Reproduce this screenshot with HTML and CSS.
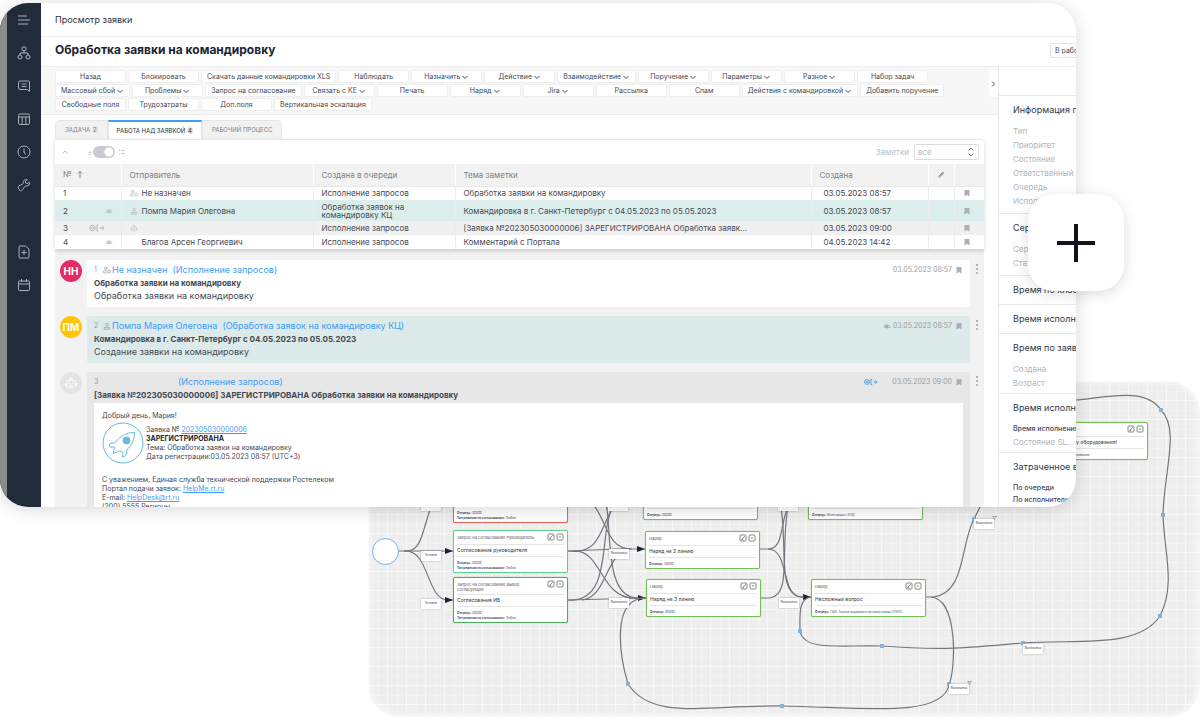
FILE: index.html
```html
<!DOCTYPE html>
<html lang="ru">
<head>
  <meta charset="UTF-8">
  <meta name="viewport" content="width=device-width, initial-scale=1.0">
  <title>Просмотр заявки</title>
  <link rel="stylesheet" href="styles.css">
</head>
<body>
  <!-- shared icons -->
  <svg class="sprite" aria-hidden="true">
    <symbol id="chev" viewBox="0 0 8 8"><path d="M1.5 3 4 5.5 6.5 3"/></symbol>
    <symbol id="mark" viewBox="0 0 8 8"><path d="M1.5 1h5v6.5L4 6 1.5 7.5z" fill="currentColor" stroke="none"/></symbol>
    <symbol id="user" viewBox="0 0 10 10"><circle cx="5" cy="3.2" r="1.7"/><path d="M1.5 9V7.600q0-1 1-1h5q1 0 1 1V9z"/></symbol>
    <symbol id="user-off" viewBox="0 0 10 10"><circle cx="3.500" cy="2.800" r="1.500"/><path d="M.6 8.500V7q0-1 1-1h3M1 8.500h3.500"/><circle cx="7.500" cy="7" r="1.800"/></symbol>
    <symbol id="eye" viewBox="0 0 10 10"><path d="M1 6q4-4 8 0-4 3-8 0zM2 3.500l1 .8M5 2.600v1M8 3.500l-1 .8"/><circle cx="5" cy="6" r="1" fill="currentColor"/></symbol>
    <symbol id="robot" viewBox="0 0 16 16"><rect x="3" y="5" width="10" height="8" rx="2"/><path d="M8 5V2.500M6 2.500h4M1.500 8v3M14.500 8v3M6 10.800h4"/><circle cx="6" cy="8.200" r=".7"/><circle cx="10" cy="8.200" r=".7"/></symbol>
    <symbol id="mail-out" viewBox="0 0 16 8"><circle cx="3.500" cy="4" r="2.800"/><circle cx="3.500" cy="4" r="1"/><path d="M9.500 1H8v6h1.500M10.500 4h4.500M13 2.200 15 4l-2 1.800"/></symbol>
    <symbol id="edit" viewBox="0 0 8 8"><rect x="1" y="1" width="6" height="6" rx="1"/><path d="M2.600 5.600 5.800 2.200M2.500 5.600h1.600"/></symbol>
    <symbol id="fold" viewBox="0 0 8 8"><rect x="1" y="1" width="6" height="6" rx="1"/><path d="M2.800 4h2.400"/></symbol>
    <symbol id="dots" viewBox="0 0 4 12"><g fill="currentColor" stroke="none"><circle cx="2" cy="2" r="1"/><circle cx="2" cy="6" r="1"/><circle cx="2" cy="10" r="1"/></g></symbol>
  </svg>

  <div class="stage">

    <section class="diagram" aria-label="Рабочий процесс">
      <svg class="edges" viewBox="0 0 832 336">
        <defs>
          <marker id="arrow" viewBox="0 0 8 6" refX="8" refY="3" markerWidth="8" markerHeight="6" markerUnits="userSpaceOnUse" orient="auto"><path d="M0 0 8 3 0 6z" fill="#1c2233" stroke="none"/></marker>
        </defs>
        <g class="lines">
          <path d="M31 170H85" marker-end="url(#arrow)"/>
          <path d="M36 170C54 172 54 150 63 126"/>
          <path d="M36 170C62 168 58 219 80 219H85" marker-end="url(#arrow)"/>
          <path d="M200 170 250 168H277" marker-end="url(#arrow)"/>
          <path d="M200 170C232 174 232 148 245 126"/>
          <path d="M205 170C234 168 232 217 266 217H278" marker-end="url(#arrow)"/>
          <path d="M200 219 278 217"/>
          <path d="M200 219C246 222 230 150 245 126"/>
          <path d="M214 219C234 217 236 190 250 174"/>
          <path d="M224 122C240 140 238 168 264 168"/>
          <path d="M238 122C244 150 236 217 270 217"/>
          <path d="M391 168H400C416 168 412 142 420 126"/>
          <path d="M400 168C422 168 412 216 434 216H443" marker-end="url(#arrow)"/>
          <path d="M392 217H402C424 214 412 170 420 126"/>
          <path d="M413 126C420 170 408 216 436 216"/>
          <path d="M557 216H565C598 212 592 164 606 138L614 122"/>
          <path d="M563 216C590 218 588 286 581 304 574 338 490 326 414 325S284 340 260 303C252 276 242 217 278 217"/>
          <path d="M443 216C430 218 432 234 432 250C436 270 468 264 514 265 580 270 610 266 655 262C710 258 770 268 792 235C808 204 796 170 795 134C796 90 812 48 793 29C778 6 740 16 708 19"/>
        </g>
        <g class="joints">
          <path d="M258 301h4v4h-4zM412 323h4v4h-4zM430 248h4v4h-4zM512 263h4v4h-4zM653 260h4v4h-4zM790 233h4v4h-4zM793 132h4v4h-4zM791 27h4v4h-4zM604 136h4v4h-4zM579 301h4v4h-4z"/>
        </g>
      </svg>

      <span class="start"></span>

      <article class="node red n-a">
        <header>Запрос на согласование</header><h4>Согласование</h4>
        <p><b>Очередь:</b> #####<br><b>Тип решения по согласованию:</b> Любой</p>
      </article>
      <article class="node mint n-b">
        <header>Запрос на согласование Руководитель<span><svg><use href="#edit"/></svg><svg><use href="#fold"/></svg></span></header>
        <h4>Согласование руководителя</h4>
        <p><b>Очередь:</b> #####<br><b>Тип решения по согласованию:</b> Любой</p>
      </article>
      <article class="node green n-c">
        <header>Запрос на согласование Выбор<br>согласующих<span><svg><use href="#edit"/></svg><svg><use href="#fold"/></svg></span></header>
        <h4>Согласование ИБ</h4>
        <p><b>Очередь:</b> #####<br><b>Тип решения по согласованию:</b> Любой</p>
      </article>
      <article class="node n-d">
        <header>Наряд</header><h4>Наряд на 1 линию</h4>
        <p><b>Очередь:</b> #####</p>
      </article>
      <article class="node n-e">
        <header>Наряд<span><svg><use href="#edit"/></svg><svg><use href="#fold"/></svg></span></header>
        <h4>Наряд на 2 линию</h4>
        <p><b>Очередь:</b> #####</p>
      </article>
      <article class="node n-f">
        <header>Наряд<span><svg><use href="#edit"/></svg><svg><use href="#fold"/></svg></span></header>
        <h4>Наряд на 3 линию</h4>
        <p><b>Очередь:</b> #####</p>
      </article>
      <article class="node n-g">
        <header>Наряд</header><h4>Интеграция</h4>
        <p><b>Очередь:</b> Интеграция с КПД</p>
      </article>
      <article class="node n-h">
        <header>Наряд<span><svg><use href="#edit"/></svg><svg><use href="#fold"/></svg></span></header>
        <h4>Несложный вопрос</h4>
        <p><b>Очередь:</b> ГШО. Группа поддержки тестовой среды СУФПС</p>
      </article>
      <article class="node n-i">
        <header>Наряд<span><svg><use href="#edit"/></svg><svg><use href="#fold"/></svg></span></header>
        <h4>Доступ к новому оборудования!</h4>
        <p><b>Очередь:</b> Группа по оборудованию</p>
      </article>

      <span class="tag t-1">Успешно</span>
      <span class="tag t-2">Условие</span>
      <span class="tag t-3">Условие</span>
      <span class="tag t-4">Выполнено</span>
      <span class="tag t-5">Выполнено</span>
      <span class="tag t-6">Выполнено</span>
      <span class="tag t-7">Выполнено</span>
      <span class="tag t-8">Выполнено</span>
      <span class="tag funnel t-9">Выполнено</span>
      <span class="tag t-10">Выполнено</span>
      <span class="tag funnel t-11">Выполнено</span>
    </section>

    <main class="window">
      <nav class="sidebar">
        <a href="#" aria-label="Меню"><svg viewBox="0 0 14 14"><path d="M1 3h9M1 7h12M1 11h10"/></svg></a>
        <a href="#" aria-label="Структура"><svg viewBox="0 0 14 14"><rect x="5" y="1" width="4" height="3.500" rx="1"/><circle cx="3" cy="11" r="2"/><circle cx="11" cy="11" r="2"/><path d="M7 4.500v2.500M3 9V7h8v2"/></svg></a>
        <a href="#" aria-label="Сообщения"><svg viewBox="0 0 14 14"><path d="M3 2h8.500q1 0 1 1v9.500L10.500 10.500H3Q1.500 10.500 1.500 9V3.500Q1.500 2 3 2zM4.500 5h5M4.500 7.500h5"/></svg></a>
        <a href="#" aria-label="Таблица"><svg viewBox="0 0 14 14"><rect x="1.500" y="2" width="11" height="10.500" rx="1.500"/><path d="M1.500 5h11M5.200 5v7.500M8.800 5v7.500"/></svg></a>
        <a href="#" aria-label="Время"><svg viewBox="0 0 14 14"><circle cx="7" cy="7" r="6"/><path d="M7 3.500V7l1.500 2.500"/></svg></a>
        <a href="#" aria-label="Настройки"><svg viewBox="0 0 14 14"><path d="M12.500 4.200 10.400 5.600 8.600 5 8.400 3.200 10.300 1.600C8 .8 5.800 2.700 6.400 5.300L5 6.400 2 7.800C.5 9 1.300 10.500 2 11l.8 1.500c1 .8 2.400.3 3-1L6.800 9.500 8.800 8C11.500 8.300 13.200 6.400 12.500 4.200z"/></svg></a>
        <a href="#" class="split" aria-label="Новый документ"><svg viewBox="0 0 14 14"><path d="M3 1h5.500L12 4v8q0 1-1 1H3q-1 0-1-1V2q0-1 1-1zM7 5v5M4.500 7.500h5"/></svg></a>
        <a href="#" aria-label="Календарь"><svg viewBox="0 0 14 14"><rect x="1.500" y="3" width="11" height="9.500" rx="1"/><path d="M1.500 6h11M4.500 1v3M9.500 1v3"/></svg></a>
      </nav>

      <div class="main">
        <div class="crumbs">Просмотр заявки</div>
        <div class="heading">
          <h1>Обработка заявки на командировку</h1>
          <button class="status">В работе</button>
        </div>

        <div class="columns">
          <div class="content">
            <div class="toolbar">
              <div class="actions">
                <button>Назад</button>
                <button>Блокировать</button>
                <button>Скачать данные командировки XLS</button>
                <button>Наблюдать</button>
                <button>Назначить<svg><use href="#chev"/></svg></button>
                <button>Действие<svg><use href="#chev"/></svg></button>
                <button>Взаимодействие<svg><use href="#chev"/></svg></button>
                <button>Поручение<svg><use href="#chev"/></svg></button>
                <button>Параметры<svg><use href="#chev"/></svg></button>
                <button>Разное<svg><use href="#chev"/></svg></button>
                <button>Набор задач</button>
                <button>Массовый сбой<svg><use href="#chev"/></svg></button>
                <button>Проблемы<svg><use href="#chev"/></svg></button>
                <button>Запрос на согласование</button>
                <button>Связать с КЕ<svg><use href="#chev"/></svg></button>
                <button>Печать</button>
                <button>Наряд<svg><use href="#chev"/></svg></button>
                <button>Jira<svg><use href="#chev"/></svg></button>
                <button>Рассылка</button>
                <button>Спам</button>
                <button>Действия с командировкой<svg><use href="#chev"/></svg></button>
                <button>Добавить поручение</button>
                <button>Свободные поля</button>
                <button>Трудозатраты</button>
                <button>Доп.поля</button>
                <button>Вертикальная эскалация</button>
              </div>
              <button class="collapse" aria-label="Свернуть"><svg viewBox="0 0 8 8"><path d="M3 1.500 5.500 4 3 6.500"/></svg></button>
            </div>

            <div class="tabs">
              <a href="#">ЗАДАЧА <i>2</i></a>
              <a href="#" class="active">РАБОТА НАД ЗАЯВКОЙ <i>4</i></a>
              <a href="#">РАБОЧИЙ ПРОЦЕСС</a>
            </div>

            <div class="card">
              <div class="filter">
                <svg class="up" viewBox="0 0 8 8"><path d="M1.500 5.500 4 3l2.500 2.500"/></svg>
                <label class="switch"><span>±</span><input type="checkbox" checked aria-label="Вид списка"></label>
                <svg class="list" viewBox="0 0 10 10"><path d="M1 2h1v2M1 7.500h1.500M4 3h5M4 7h5"/></svg>
                <label class="pick">Заметки <select><option>все</option></select><svg viewBox="0 0 8 10"><path d="M1.500 3.500 4 1l2.500 2.500M1.500 6.500 4 9l2.500-2.500"/></svg></label>
              </div>
              <table>
                <colgroup><col class="c-num"><col class="c-from"><col class="c-queue"><col><col class="c-date"><col class="c-clip"><col class="c-mark"></colgroup>
                <thead>
                  <tr><th>№ <svg class="sort" viewBox="0 0 8 10"><path d="M4 9V1.500M1.500 4 4 1.500 6.500 4"/></svg></th><th>Отправитель</th><th>Создана в очереди</th><th>Тема заметки</th><th>Создана</th><th><svg class="clip" viewBox="0 0 10 10"><path d="M2 7.500 6.500 2.500q1.500-1 2 .5L4.500 7.800q-1.500 1.200-2.500 0M3.500 6.500 7 3.500"/></svg></th><th></th></tr>
                </thead>
                <tbody>
                  <tr><td>1</td><td><span class="who"><svg><use href="#user-off"/></svg>Не назначен</span></td><td>Исполнение запросов</td><td>Обработка заявки на командировку</td><td>03.05.2023 08:57</td><td></td><td><svg class="mark"><use href="#mark"/></svg></td></tr>
                  <tr class="sel"><td>2<svg class="flag"><use href="#eye"/></svg></td><td><span class="who"><svg><use href="#user"/></svg>Помпа Мария Олеговна</span></td><td>Обработка заявок на командировку КЦ</td><td>Командировка в г. Санкт-Петербург с 04.05.2023 по 05.05.2023</td><td>03.05.2023 08:57</td><td></td><td><svg class="mark"><use href="#mark"/></svg></td></tr>
                  <tr class="alt"><td>3<svg class="flag wide"><use href="#mail-out"/></svg></td><td><span class="who"><svg><use href="#robot"/></svg></span></td><td>Исполнение запросов</td><td>[Заявка №202305030000006] ЗАРЕГИСТРИРОВАНА Обработка заявк...</td><td>03.05.2023 09:00</td><td></td><td><svg class="mark"><use href="#mark"/></svg></td></tr>
                  <tr><td>4<svg class="flag"><use href="#eye"/></svg></td><td><span class="who"><svg></svg>Благов Арсен Георгиевич</span></td><td>Исполнение запросов</td><td>Комментарий с Портала</td><td>04.05.2023 14:42</td><td></td><td><svg class="mark"><use href="#mark"/></svg></td></tr>
                </tbody>
              </table>
            </div>

            <div class="notes">
              <div class="note">
                <span class="avatar pink">НН</span>
                <div class="bubble">
                  <div class="meta"><small>1</small><svg><use href="#user-off"/></svg><a href="#">Не назначен&nbsp; (Исполнение запросов)</a><time>03.05.2023 08:57</time><svg class="mark"><use href="#mark"/></svg></div>
                  <h3>Обработка заявки на командировку</h3>
                  <p>Обработка заявки на командировку</p>
                </div>
                <svg class="dots"><use href="#dots"/></svg>
              </div>
              <div class="note">
                <span class="avatar yellow">ПМ</span>
                <div class="bubble teal">
                  <div class="meta"><small>2</small><svg><use href="#user"/></svg><a href="#">Помпа Мария Олеговна&nbsp; (Обработка заявок на командировку КЦ)</a><svg class="pre"><use href="#eye"/></svg><time>03.05.2023 08:57</time><svg class="mark"><use href="#mark"/></svg></div>
                  <h3>Командировка в г. Санкт-Петербург с 04.05.2023 по 05.05.2023</h3>
                  <p>Создание заявки на командировку</p>
                </div>
                <svg class="dots"><use href="#dots"/></svg>
              </div>
              <div class="note">
                <span class="avatar bot"><svg><use href="#robot"/></svg></span>
                <div class="bubble gray">
                  <div class="meta"><small>3</small><a href="#" class="far">(Исполнение запросов)</a><svg class="pre out"><use href="#mail-out"/></svg><time>03.05.2023 09:00</time><svg class="mark"><use href="#mark"/></svg></div>
                  <h3>[Заявка №202305030000006] ЗАРЕГИСТРИРОВАНА Обработка заявки на командировку</h3>
                  <div class="letter">
                    <p>Добрый день, Мария!</p>
                    <div class="ticket">
                      <svg viewBox="0 0 42 42"><circle cx="21" cy="21" r="20"/><path d="M32.500 10.500C24 10.500 18 14.500 13.500 20.500L8 21.500Q6.500 22.500 8 25L12.500 25Q12 29 11 31.500 14 30.500 17.500 29L21 30.500Q21.500 32 20 35 23 35.500 24.500 32L25 27.500C30 23.500 32.500 18 32.500 10.500z"/><circle class="fill" cx="24.500" cy="18.500" r="3.500"/></svg>
                      <p>Заявка № <a href="#">202305030000006</a><br><b>ЗАРЕГИСТРИРОВАНА</b><br>Тема: Обработка заявки на командировку<br>Дата регистрации:03.05.2023 08:57 (UTC+3)</p>
                    </div>
                    <p>С уважением, Единая служба технической поддержки Ростелеком<br>Портал подачи заявок: <a href="#">HelpMe.rt.ru</a><br>E-mail: <a href="#">HelpDesk@rt.ru</a><br>(200) 5555 Регионы</p>
                  </div>
                </div>
                <svg class="dots"><use href="#dots"/></svg>
              </div>
            </div>
          </div>

          <aside class="details">
            <div class="blank"></div>
            <section>
              <h2>Информация по заявке</h2>
              <p>Тип</p><p>Приоритет</p><p>Состояние</p><p>Ответственный</p><p>Очередь</p><p>Исполнитель</p>
            </section>
            <section>
              <h2>Сервис</h2>
              <p>Сервис</p><p>Статус</p>
            </section>
            <section><h2>Время по классу</h2></section>
            <section><h2>Время исполнения</h2></section>
            <section class="tight">
              <h2>Время по заявке</h2>
              <p>Создана</p><p>Возраст</p>
            </section>
            <section class="tight">
              <h2>Время исполнения</h2>
              <h5>Время исполнения</h5><p>Состояние SL...</p>
            </section>
            <section>
              <h2>Затраченное время</h2>
              <h5>По очереди</h5><h5>По исполнителю</h5>
            </section>
          </aside>
        </div>
      </div>
    </main>

    <button class="plus" aria-label="Добавить"><svg viewBox="0 0 40 40"><path d="M20 1v38M1 20h38"/></svg></button>
  </div>
</body>
</html>
```
FILE: styles.css
```css
* {
  box-sizing: border-box;
}
body, h1, h2, h3, h4, h5, p {
  margin: 0;
}
body {
  font-family: Inter, "Noto Sans", sans-serif;
  font-size: 8px;
  color: #444955;
  background: #fff;
}
a {
  color: #3f9df5;
  text-decoration: none;
}
button, select {
  font: inherit;
  color: inherit;
}
svg {
  display: block;
  flex: none;
  width: 8px;
  height: 8px;
  fill: none;
  stroke: currentColor;
}
.sprite {
  position: absolute;
  width: 0;
  height: 0;
}
.stage {
  position: relative;
  height: 100vh;
  padding: 3px 124px 210px 0;
  overflow: hidden;
}

/* window */
.window {
  position: relative;
  display: flex;
  height: 100%;
  border-radius: 28px;
  overflow: hidden;
  background: #fff;
  box-shadow: 0 2px 18px rgba(0, 0, 0, 0.16);
}
.sidebar {
  flex: none;
  width: 41px;
  border-left: 7px solid #8c8c8c;
  background: #222b3a;
}
.sidebar a {
  display: flex;
  align-items: center;
  justify-content: center;
  height: 33px;
  color: #aab0b9;
}
.sidebar .split {
  margin-top: 34px;
}
.sidebar svg {
  width: 14px;
  height: 14px;
}
.main {
  display: flex;
  flex-direction: column;
  flex: 1;
  min-width: 0;
}
.crumbs {
  flex: none;
  padding-left: 14px;
  font-size: 9px;
  line-height: 33px;
  color: #2b303a;
  border-bottom: 1px solid #ececec;
}
.heading {
  display: flex;
  flex: none;
  align-items: center;
  justify-content: space-between;
  height: 29px;
  padding: 0 0 3px 14px;
}
h1 {
  font-size: 12px;
  font-weight: 700;
  line-height: 16px;
  color: #1c2430;
}
.status {
  flex: none;
  width: 26px;
  height: 15px;
  padding: 0 0 0 4px;
  overflow: hidden;
  white-space: nowrap;
  text-align: left;
  font-size: 7px;
  background: #fff;
  border: 1px solid #e4e4e4;
  border-right: 0;
  border-radius: 2px 0 0 2px;
}
.columns {
  display: flex;
  flex: 1;
  min-height: 0;
}
.content {
  display: flex;
  flex-direction: column;
  flex: 1;
  min-width: 0;
}

/* toolbar */
.toolbar {
  display: flex;
  justify-content: space-between;
  flex: none;
  height: 49px;
  padding: 3px 0 0 14px;
  background: #f7f7f7;
  border-top: 1px solid #eee;
  border-bottom: 1px solid #eaeaea;
}
.actions {
  display: flex;
  flex-wrap: wrap;
  align-content: flex-start;
  gap: 1px 2px;
}
.actions button {
  display: flex;
  align-items: center;
  justify-content: center;
  gap: 1px;
  min-width: 71px;
  height: 13px;
  padding: 0 5px;
  font-size: 7px;
  line-height: 11px;
  background: #fff;
  border: 1px solid #eee;
  border-radius: 2px;
}
.collapse {
  flex: none;
  width: 9px;
  height: 27px;
  padding: 0;
  background: #fff;
  border: 0;
  border-radius: 4px 0 0 4px;
}

/* tabs */
.tabs {
  display: flex;
  flex: none;
  padding: 5px 0 0 14px;
}
.tabs a {
  padding: 0 9px;
  font-size: 6px;
  line-height: 18px;
  color: #7d828a;
  background: #f2f2f2;
  border: 1px solid #e6e6e6;
  border-bottom: 0;
}
.tabs a:first-child {
  border-radius: 5px 0 0 0;
}
.tabs a:last-child {
  border-radius: 0 5px 0 0;
}
.tabs .active {
  padding: 0 8px;
  line-height: 17px;
  color: #2b303a;
  background: #fff;
  border-top: 2px solid #3f9df5;
}
.tabs i {
  padding: 0 1px;
  font-style: normal;
  background: #e4e4e4;
  border-radius: 4px;
}

/* notes table */
.card {
  position: relative;
  flex: none;
  margin: 0 14px;
  background: #fff;
  border-top: 1px solid #e8e8e8;
  border-radius: 0 4px 0 0;
  box-shadow: 0 2px 4px rgba(0, 0, 0, 0.16);
}
.filter {
  display: flex;
  align-items: center;
  gap: 3px;
  height: 24px;
  padding: 0 5px 0 6px;
  color: #b9bcc6;
}
.switch {
  display: flex;
  align-items: center;
  gap: 1px;
  margin-left: 16px;
  font-size: 6px;
}
.switch input {
  appearance: none;
  width: 22px;
  height: 12px;
  margin: 0;
  border-radius: 6px;
  background: radial-gradient(circle at 16px 6px, #fff 4px, #c9cad4 5px);
}
.pick {
  display: flex;
  align-items: center;
  gap: 5px;
  margin-left: auto;
  font-size: 8px;
}
.pick select {
  appearance: none;
  width: 65px;
  height: 16px;
  margin-right: -17px;
  padding: 0 3px;
  background: #fff;
  border: 1px solid #ddd;
  border-radius: 2px;
}
.pick svg {
  height: 10px;
  margin-right: 4px;
  color: #777;
}
table {
  width: 100%;
  table-layout: fixed;
  border-collapse: collapse;
  font-size: 8px;
  line-height: 8px;
}
.c-num { width: 66px; }
.c-from { width: 192px; }
.c-queue { width: 142px; }
.c-date { width: 117px; }
.c-clip { width: 26px; }
.c-mark { width: 30px; }
th, td {
  padding: 0 8px;
  text-align: left;
  font-weight: 400;
  border-right: 1px solid #ececec;
}
th:last-child, td:last-child {
  border-right: 0;
}
th {
  height: 22px;
  color: #7b7f88;
  background: #f2f2f2;
  border-bottom: 1px solid #e8e8e8;
  border-right-color: #fff;
}
td {
  height: 14px;
}
td:nth-child(5) {
  padding-left: 12px;
}
.sel td {
  height: 21px;
  padding-right: 24px;
  background: #dbeeeb;
}
.sel td:first-child {
  padding-right: 8px;
}
.alt td {
  background: #f0f0f0;
}
.sort, .clip {
  display: inline-block;
  height: 9px;
  vertical-align: middle;
}
.sort {
  margin-left: 2px;
}
.flag {
  float: right;
  color: #b4b8bc;
}
.flag.wide {
  width: 16px;
  margin-right: 8px;
}
.who {
  display: flex;
  align-items: center;
  gap: 4px;
}
.who svg {
  color: #b4b8bc;
}
.mark {
  color: #adb1b5;
}

/* notes feed */
.notes {
  display: flex;
  flex-direction: column;
  flex: 1;
  gap: 9px;
  min-height: 0;
  margin: 0 14px;
  padding: 11px 5px 0;
  overflow: hidden;
  background: #f2f2f3;
}
.note {
  display: flex;
  flex: none;
}
.avatar {
  display: flex;
  align-items: center;
  justify-content: center;
  flex: none;
  width: 22px;
  height: 22px;
  margin-right: 5px;
  border-radius: 50%;
  font-size: 10px;
  font-weight: 700;
  color: #fff;
}
.avatar.pink { background: #e62a66; }
.avatar.yellow { background: #fdc506; }
.avatar.bot { background: #e4e4e4; }
.avatar.bot svg {
  width: 14px;
  height: 14px;
}
.bubble {
  flex: 1;
  min-width: 0;
  height: 47px;
  padding: 3px 7px 0;
  background: #fff;
  border-radius: 3px;
}
.bubble.teal { background: #dceae9; }
.bubble.gray {
  height: auto;
  background: #e7e7e7;
}
.dots {
  width: 4px;
  height: 12px;
  margin: 3px 0 0 5px;
  color: #a0a4a8;
}
.meta {
  display: flex;
  align-items: center;
  height: 13px;
  color: #9a9ea3;
}
.meta small {
  width: 9px;
  font-size: 7px;
}
.meta a {
  margin: 0 auto 0 1px;
  font-size: 9px;
}
.meta .far {
  margin-left: 75px;
}
.meta time {
  margin: 0 3px 0 2px;
  font-size: 7px;
}
.meta .out {
  width: 14px;
  margin-right: 12px;
  color: #3f9df5;
}
.bubble h3 {
  font-size: 8px;
  font-weight: 700;
  line-height: 14px;
}
.bubble > p {
  font-size: 9px;
  line-height: 12px;
}
.letter {
  margin-top: 1px;
  padding: 8px 8px 0;
  font-size: 7px;
  line-height: 9px;
  background: #fff;
}
.letter b {
  color: #22262e;
}
.letter a {
  text-decoration: underline;
}
.ticket {
  display: flex;
  align-items: center;
  margin: 2px 0 11px;
}
.ticket svg {
  width: 42px;
  height: 42px;
  margin-right: 2px;
  color: #68bade;
}
.ticket .fill {
  fill: currentColor;
}

/* details panel */
.details {
  flex: none;
  width: 78px;
  overflow: hidden;
  white-space: nowrap;
  border-left: 1px solid #e6e6e6;
  border-top: 1px solid #eee;
}
.blank {
  height: 28px;
}
.details section {
  padding: 6px 0 5px 14px;
  border-top: 1px solid #e8e8e8;
}
.details .tight {
  padding-bottom: 3px;
}
.details h2 {
  margin-bottom: 2px;
  font-size: 9px;
  font-weight: 400;
  line-height: 15px;
  color: #333843;
}
.details p {
  font-size: 8px;
  line-height: 14px;
  color: #b2b5b9;
}
.details h2 + p {
  margin-top: 7px;
}
.details h5 {
  font-size: 7px;
  font-weight: 500;
  line-height: 12px;
}
.details h2 + h5 {
  margin-top: 8px;
}

/* workflow canvas */
.diagram {
  position: absolute;
  right: 0;
  bottom: 0;
  width: 832px;
  height: 336px;
  overflow: hidden;
  border-radius: 32px;
  background-color: #eee;
  background-image:
    linear-gradient(#f8f8f8 1px, transparent 1px, transparent 10px, #f3f3f3 10px, #f3f3f3 11px, transparent 11px),
    linear-gradient(90deg, #f8f8f8 1px, transparent 1px, transparent 10px, #f3f3f3 10px, #f3f3f3 11px, transparent 11px);
  background-size: 19px 19px;
  box-shadow: inset 0 0 8px #fff;
}
.edges {
  position: absolute;
  inset: 0;
  width: 100%;
  height: 100%;
}
.lines {
  stroke: #74767f;
  stroke-width: 1.2;
}
.joints {
  fill: #86b4d8;
  stroke: none;
}
.start {
  position: absolute;
  left: 4px;
  top: 157px;
  width: 27px;
  height: 27px;
  background: #fff;
  border: 1px solid #6eb2ee;
  border-radius: 50%;
}
.node {
  position: absolute;
  width: 115px;
  padding: 4px 3px 1px;
  font-size: 4px;
  line-height: 5px;
  background: #fff;
  border: 1px solid #74c057;
  border-radius: 2px;
  box-shadow: 0 0 1px #74c057;
}
.node.red { border-color: #e4675c; box-shadow: 0 0 1px #e4675c; }
.node.mint { border-color: #5fcf8c; box-shadow: 0 0 1px #5fcf8c; }
.node.green { border-color: #4fab5e; box-shadow: 0 0 1px #4fab5e; }
.node header {
  position: relative;
  min-height: 9px;
  color: #555;
}
.node header span {
  position: absolute;
  top: -2px;
  right: 0;
  display: flex;
  gap: 1px;
  color: #888;
}
.node h4 {
  font-size: 5px;
  font-weight: 400;
  line-height: 11px;
  color: #333;
  border: solid #e4e4e4;
  border-width: 1px 0;
}
.node p {
  padding-top: 4px;
  white-space: nowrap;
  overflow: hidden;
  font-size: 3px;
}
.n-a { left: 85px; top: 99px; }
.n-b { left: 85px; top: 149px; }
.n-c { left: 85px; top: 196px; }
.n-c header { min-height: 12px; }
.n-d { left: 275px; top: 101px; }
.n-e { left: 277px; top: 150px; }
.n-f { left: 278px; top: 198px; }
.n-g { left: 440px; top: 101px; }
.n-h { left: 443px; top: 198px; }
.n-i { left: 665px; top: 41px; }
.tag {
  position: absolute;
  width: 20px;
  height: 10px;
  font-size: 3px;
  line-height: 8px;
  text-align: center;
  color: #444;
  background: #fff;
  box-shadow: 0 0 2px rgba(0, 0, 0, 0.3);
}
.funnel::after {
  content: "▽";
  position: absolute;
  top: -5px;
  right: -3px;
  font-size: 5px;
  color: #777;
}
.t-1 { left: 53px; top: 120px; }
.t-2 { left: 53px; top: 170px; }
.t-3 { left: 53px; top: 218px; }
.t-4 { left: 240px; top: 120px; }
.t-5 { left: 241px; top: 168px; }
.t-6 { left: 241px; top: 217px; }
.t-7 { left: 410px; top: 120px; }
.t-8 { left: 411px; top: 217px; }
.t-9 { left: 606px; top: 138px; }
.t-10 { left: 655px; top: 263px; }
.t-11 { left: 581px; top: 303px; }

/* add button */
.plus {
  position: absolute;
  top: 194px;
  right: 76px;
  display: flex;
  align-items: center;
  justify-content: center;
  width: 96px;
  height: 97px;
  background: #fff;
  border: 0;
  border-radius: 26px;
  box-shadow: 0 3px 14px rgba(0, 0, 0, 0.14);
}
.plus svg {
  width: 40px;
  height: 40px;
  color: #10131c;
  stroke-width: 4;
}
```
